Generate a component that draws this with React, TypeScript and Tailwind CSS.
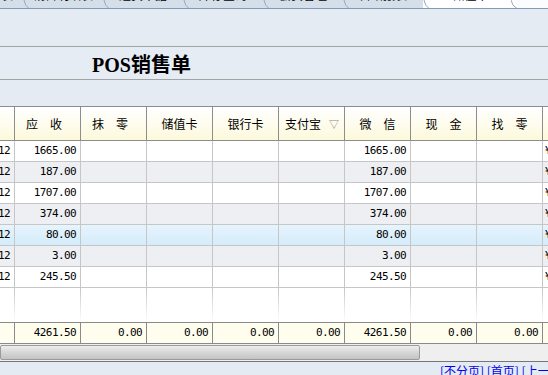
import React from "react";

const gray = "bg-[#eeeff3]";
const white = "bg-white";
const sel = "bg-gradient-to-b from-[#e6f4fd] to-[#d4ecfa]";

const rows = [
  { amt: "1665.00", bg: white },
  { amt: "187.00", bg: gray },
  { amt: "1707.00", bg: white },
  { amt: "374.00", bg: gray },
  { amt: "80.00", bg: sel },
  { amt: "3.00", bg: gray },
  { amt: "245.50", bg: white },
];

const heads = ["应　收", "抹　零", "储值卡", "银行卡", "支付宝", "微　信", "现　金", "找　零"];
const totals = ["4261.50", "0.00", "0.00", "0.00", "0.00", "4261.50", "0.00", "0.00"];

const tabs = ["销售明细表", "退货单据", "库存查询", "会员管理", "日结报表"];

const mono = "font-['DejaVu_Sans_Mono','Liberation_Mono',monospace] text-[11px] tracking-[-0.6px]";

function Slant({ right }: { right?: boolean }) {
  return (
    <svg
      width="7"
      height="9"
      viewBox="0 0 7 9"
      className={"absolute top-0 " + (right ? "right-0" : "left-0")}
    >
      <path
        d={right ? "M0 0 Q1 6 6 8.5" : "M1 0 Q2 6 6 8.5"}
        fill="none"
        stroke="#93a9c4"
        strokeWidth="1"
      />
    </svg>
  );
}

function Tabs() {
  return (
    <div className="flex h-[9px] bg-[#d5dfe9] border-b border-[#7f9ab8] overflow-hidden">
      <div className="w-[23px] overflow-hidden">
        <span className="block -mt-[11px] text-[12px] leading-[12px] text-right pr-[10px]">表</span>
      </div>
      {tabs.map((t) => (
        <div key={t} className="relative w-[80px] overflow-hidden">
          <Slant />
          <span className="block -mt-[11px] text-[12px] leading-[12px] text-center">{t}</span>
        </div>
      ))}
      <div className="relative w-[95px] bg-white overflow-hidden">
        <Slant />
        <Slant right />
        <span className="block -mt-[11px] text-[12px] leading-[12px] text-center">储值卡</span>
      </div>
      <div className="flex-1 bg-[#fbfcfe]" />
    </div>
  );
}

function App() {
  return (
    <div className="w-[548px] h-[375px] overflow-hidden bg-[#e4ebf3] text-black font-['Noto_Sans_CJK_SC',sans-serif]">
      <Tabs />
      <div className="h-[38px] border-b border-[#a3a3a3]" />
      <div className="h-[33px] border-b border-[#a3a3a3] bg-[#e6ecf4] flex items-center pl-[92px]">
        <span className="text-[20px] font-bold leading-none pt-[2px]">
          <span className="font-['Liberation_Serif',serif]">POS</span>销售单
        </span>
      </div>
      <div className="h-[26px]" />

      {/* header */}
      <div className="flex h-[35px] border-y border-[#8d8d8d] bg-gradient-to-b from-white to-[#fdf9dc] text-[12px]">
        <div className="w-[15px] shrink-0 border-r border-[#8d8d8d]" />
        {heads.map((h, i) => (
          <div
            key={h}
            className={
              "w-[66px] shrink-0 border-r border-[#8d8d8d] flex items-center " +
              (i === 4 ? "justify-start pl-[6px] gap-[8px]" : i < 2 ? "justify-center pr-[7px]" : "justify-center")
            }
          >
            <span>{h}</span>
            {i === 4 && <span className="text-[10px] text-[#8a8a8a]">▽</span>}
          </div>
        ))}
        <div className="flex-1" />
      </div>

      {/* rows */}
      {rows.map((r, idx) => (
        <div key={idx} className={"flex h-[21px] border-b border-[#c6c6c6] " + r.bg + " " + mono}>
          <div className="w-[15px] shrink-0 border-r border-[#c6c6c6] flex items-center justify-end pr-[4px] overflow-hidden">
            12
          </div>
          {heads.map((h, i) => (
            <div
              key={h}
              className="w-[66px] shrink-0 border-r border-[#c6c6c6] flex items-center justify-end pr-[4px]"
            >
              {i === 0 || i === 5 ? r.amt : ""}
            </div>
          ))}
          <div className="flex-1 flex items-center pl-[2px] overflow-hidden">¥</div>
        </div>
      ))}

      {/* filler */}
      <div className="flex h-[34px] bg-white">
        <div className="w-[15px] shrink-0 flex justify-end">
          <div className="w-px h-full bg-gradient-to-b from-[#c6c6c6] to-white" />
        </div>
        {heads.map((h) => (
          <div key={h} className="w-[66px] shrink-0 flex justify-end">
            <div className="w-px h-full bg-gradient-to-b from-[#c6c6c6] to-white" />
          </div>
        ))}
        <div className="flex-1" />
      </div>

      {/* totals */}
      <div className={"flex h-[22px] border-y border-[#8a8a8a] bg-[#fffdee] " + mono}>
        <div className="w-[15px] shrink-0 border-r border-[#8a8a8a]" />
        {totals.map((t, i) => (
          <div
            key={i}
            className="w-[66px] shrink-0 border-r border-[#8a8a8a] flex items-center justify-end pr-[4px]"
          >
            {t}
          </div>
        ))}
        <div className="flex-1" />
      </div>

      {/* scrollbar */}
      <div className="h-[18px] border-b border-[#767676] bg-[#efefef] pt-[1px]">
        <div className="w-[420px] h-[15px] rounded-[2px] border border-[#9a9a9a] bg-gradient-to-b from-[#eeeeee] via-[#d6d6d6] to-[#c4c4c4]" />
      </div>

      {/* pager */}
      <div className="pl-[440px] pt-[2px] text-[12px] leading-[14px] text-[#0000ee] whitespace-nowrap">
        [不分页] [首页] [上一页]
      </div>
    </div>
  );
}

export default App;
